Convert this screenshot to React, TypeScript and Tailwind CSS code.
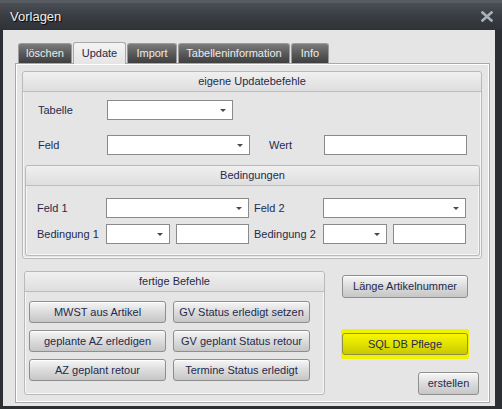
import React from "react";

const font = { fontFamily: '"Liberation Sans", Arial, sans-serif' };

function Combo({ w }: { w: string }) {
  return (
    <div className={`${w} h-[20px] bg-white border border-[#8a8a8a] flex items-center justify-end pr-[6px]`}>
      <span className="w-0 h-0 border-l-[3px] border-r-[3px] border-t-[3px] border-l-transparent border-r-transparent border-t-[#4a4a4a]" />
    </div>
  );
}

function Input({ w }: { w: string }) {
  return <div className={`${w} h-[20px] bg-white border border-[#8a8a8a]`} />;
}

function Btn({ label, w, h = "h-[22px]" }: { label: string; w: string; h?: string }) {
  return (
    <div
      className={`${w} ${h} rounded-[3px] border border-[#8e8e8e] bg-gradient-to-b from-[#f6f6f6] via-[#dcdcdc] to-[#c6c6c6] shadow-[inset_0_1px_0_#ffffff] flex items-center justify-center text-[11px] text-[#1f2a4d]`}
    >
      {label}
    </div>
  );
}

function GroupHeader({ title }: { title: string }) {
  return (
    <div className="h-[20px] border-b border-[#bdbdbd] bg-gradient-to-b from-[#f0f0f0] to-[#dedede] rounded-t-[3px] flex items-center justify-center text-[11px] text-[#1f2a4d]">
      {title}
    </div>
  );
}

const tabs = [
  { label: "löschen", w: "w-[54px]" },
  { label: "Update", w: "w-[53px]", active: true },
  { label: "Import", w: "w-[50px]" },
  { label: "Tabelleninformation", w: "w-[112px]" },
  { label: "Info", w: "w-[38px]" },
];

const fertige = [
  "MWST aus Artikel",
  "GV Status erledigt setzen",
  "geplante AZ erledigen",
  "GV geplant Status retour",
  "AZ geplant retour",
  "Termine Status erledigt",
];

export default function App() {
  return (
    <div className="w-[502px] h-[409px] bg-[#2c2f34] flex flex-col" style={font}>
      {/* title bar */}
      <div className="h-[30px] shrink-0 bg-gradient-to-b from-[#4b4f56] via-[#393c42] to-[#2f3237] border-t-[3px] border-[#575b62] flex items-center justify-between pl-[10px] pr-[9px]">
        <span className="text-[13px] text-[#eeeeee] [text-shadow:1px_1px_1px_#000]">Vorlagen</span>
        <svg width="12" height="11" viewBox="0 0 12 11">
          <path d="M1.5 1.5 L10.5 9.5 M10.5 1.5 L1.5 9.5" stroke="#a7b0bb" strokeWidth="2.6" strokeLinecap="square" />
        </svg>
      </div>

      {/* content */}
      <div className="ml-[3px] w-[492px] h-[376px] bg-[#e5e5e5] pt-[11px] px-[12px]">
        {/* tabs */}
        <div className="flex items-end gap-[1px] pl-[3px] h-[22px]">
          {tabs.map((t) =>
            t.active ? (
              <div
                key={t.label}
                className={`${t.w} h-[22px] rounded-t-[3px] border border-b-0 border-[#a9a9a9] bg-gradient-to-b from-[#f4f4f4] to-[#e5e5e5] flex items-center justify-center text-[11px] text-[#1f2a4d] -mb-[1px] relative`}
              >
                {t.label}
              </div>
            ) : (
              <div
                key={t.label}
                className={`${t.w} h-[20px] rounded-t-[3px] border border-b-0 border-[#9b9b9b] bg-gradient-to-b from-[#7c7c7c] via-[#5a5a5a] to-[#3f3f3f] flex items-center justify-center text-[11px] text-[#ececec]`}
              >
                {t.label}
              </div>
            )
          )}
        </div>

        {/* tab panel */}
        <div className="w-[475px] h-[340px] border border-[#a8a8a8] shadow-[inset_1px_1px_0_#ffffff,inset_-1px_-1px_0_#ffffff] pt-[7px] pl-[6px]">
          {/* eigene Updatebefehle */}
          <div className="w-[460px] h-[188px] border border-[#b9b9b9] rounded-[3px] shadow-[inset_0_0_0_1px_#f6f6f6]">
            <GroupHeader title="eigene Updatebefehle" />
            <div className="flex items-center pl-[15px] mt-[8px] text-[11px] text-[#1f2a4d]">
              <span className="w-[69px]">Tabelle</span>
              <Combo w="w-[126px]" />
            </div>
            <div className="flex items-center pl-[15px] mt-[15px] text-[11px] text-[#1f2a4d]">
              <span className="w-[69px]">Feld</span>
              <Combo w="w-[143px]" />
              <span className="w-[55px] ml-[19px]">Wert</span>
              <Input w="w-[143px]" />
            </div>

            {/* Bedingungen */}
            <div className="ml-[2px] mt-[10px] w-[455px] h-[91px] border border-[#b9b9b9] rounded-[3px] shadow-[inset_0_0_0_1px_#f6f6f6]">
              <GroupHeader title="Bedingungen" />
              <div className="flex items-center pl-[11px] mt-[12px] text-[11px] text-[#1f2a4d]">
                <span className="w-[69px]">Feld 1</span>
                <Combo w="w-[143px]" />
                <span className="w-[69px] ml-[5px]">Feld 2</span>
                <Combo w="w-[143px]" />
              </div>
              <div className="flex items-center pl-[11px] mt-[6px] text-[11px] text-[#1f2a4d]">
                <span className="w-[69px]">Bedingung 1</span>
                <Combo w="w-[64px]" />
                <div className="ml-[6px]">
                  <Input w="w-[73px]" />
                </div>
                <span className="w-[69px] ml-[5px]">Bedingung 2</span>
                <Combo w="w-[64px]" />
                <div className="ml-[6px]">
                  <Input w="w-[73px]" />
                </div>
              </div>
            </div>
          </div>

          {/* bottom area */}
          <div className="flex mt-[12px] ml-[2px]">
            <div className="w-[301px] h-[124px] border border-[#b9b9b9] rounded-[3px] shadow-[inset_0_0_0_1px_#f6f6f6]">
              <GroupHeader title="fertige Befehle" />
              <div className="grid grid-cols-[137px_137px] gap-x-[7px] gap-y-[7px] pl-[4px] mt-[9px]">
                {fertige.map((f) => (
                  <Btn key={f} label={f} w="w-[137px]" />
                ))}
              </div>
            </div>

            <div className="ml-[17px] w-[137px] flex flex-col">
              <div className="mt-[4px]">
                <Btn label="Länge Artikelnummer" w="w-[126px]" h="h-[23px]" />
              </div>
              <div className="mt-[31px] w-[128px] -ml-[1px] py-[4px] pr-[1px] bg-[#f2f200] rounded-[2px]">
                <div className="ml-[1px] w-[126px] h-[22px] rounded-[3px] border border-[#8f8f45] bg-gradient-to-b from-[#f7f700] via-[#e2e200] to-[#c9c900] flex items-center justify-center text-[11px] text-[#1f2a4d]">
                  SQL DB Pflege
                </div>
              </div>
              <div className="mt-[13px] self-end">
                <Btn label="erstellen" w="w-[61px]" h="h-[23px]" />
              </div>
            </div>
          </div>
        </div>
      </div>
    </div>
  );
}
